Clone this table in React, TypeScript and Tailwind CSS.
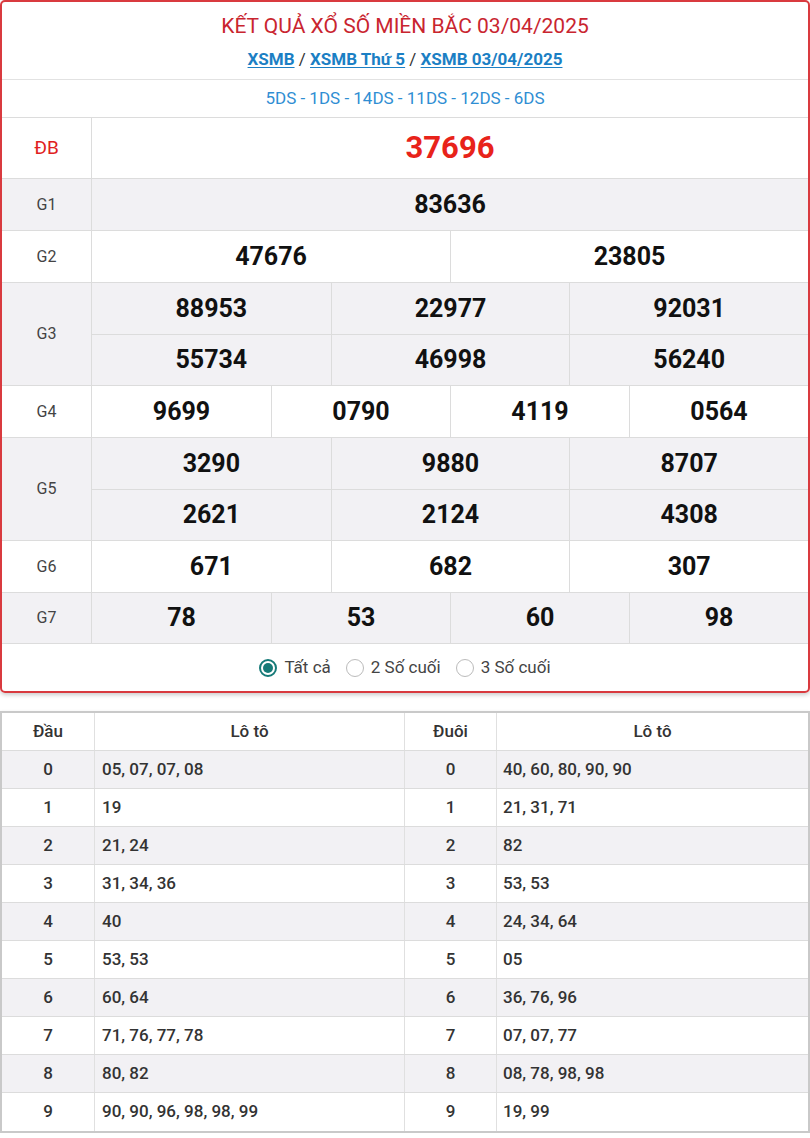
import React from "react";

const F = { fontFamily: "Roboto, 'Noto Sans', sans-serif" };

function Cells({ vals, cols, bg, h = "h-[52px]" }: { vals: string[]; cols: number; bg: string; h?: string }) {
  const gridCls = cols === 1 ? "grid-cols-1" : cols === 2 ? "grid-cols-2" : cols === 3 ? "grid-cols-3" : "grid-cols-4";
  return (
    <div className={`grid ${gridCls} ${bg}`}>
      {vals.map((v, i) => (
        <div
          key={i}
          className={`${h} flex items-center justify-center text-[25px] font-bold text-[#111] border-b border-[#dcdcdc] ${i % cols !== 0 ? "border-l" : ""}`}
        >
          {v}
        </div>
      ))}
    </div>
  );
}

function Row({ label, children, bg }: { label: React.ReactNode; children: React.ReactNode; bg: string }) {
  return (
    <div className={`flex ${bg}`}>
      <div className="w-[90px] shrink-0 flex items-center justify-center text-[16px] text-[#444] border-r border-b border-[#dcdcdc]">
        {label}
      </div>
      <div className="flex-1">{children}</div>
    </div>
  );
}

const dau = [
  ["0", "05, 07, 07, 08", "0", "40, 60, 80, 90, 90"],
  ["1", "19", "1", "21, 31, 71"],
  ["2", "21, 24", "2", "82"],
  ["3", "31, 34, 36", "3", "53, 53"],
  ["4", "40", "4", "24, 34, 64"],
  ["5", "53, 53", "5", "05"],
  ["6", "60, 64", "6", "36, 76, 96"],
  ["7", "71, 76, 77, 78", "7", "07, 07, 77"],
  ["8", "80, 82", "8", "08, 78, 98, 98"],
  ["9", "90, 90, 96, 98, 98, 99", "9", "19, 99"],
];

export default function App() {
  const grey = "bg-[#f2f1f4]";
  const white = "bg-white";
  return (
    <div style={F} className="w-[810px] bg-white">
      <div className="border-2 border-[#d93a3f] rounded-[5px] shadow-[0_2px_4px_rgba(0,0,0,0.2)] overflow-hidden">
        <div className="h-[78px] flex flex-col items-center border-b border-[#e2e2e2]">
          <div className="mt-[10px] text-[21px] leading-[28px] text-[#c9252f]">KẾT QUẢ XỔ SỐ MIỀN BẮC 03/04/2025</div>
          <div className="mt-[9px] text-[17px] leading-[20px] font-bold text-[#1b7fc4]">
            <span className="underline underline-offset-2">XSMB</span>
            <span className="text-[#333] font-normal"> / </span>
            <span className="underline underline-offset-2">XSMB Thứ 5</span>
            <span className="text-[#333] font-normal"> / </span>
            <span className="underline underline-offset-2">XSMB 03/04/2025</span>
          </div>
        </div>
        <div className="h-[38px] flex items-center justify-center text-[17px] text-[#2f8ed3] border-b border-[#dcdcdc]">
          5DS - 1DS - 14DS - 11DS - 12DS - 6DS
        </div>
        <Row label={<span className="text-[#e02020] text-[19px]">ĐB</span>} bg={white}>
          <div className="h-[61px] flex items-center justify-center text-[31px] font-bold text-[#e8231a] border-b border-[#dcdcdc]">37696</div>
        </Row>
        <Row label="G1" bg={grey}>
          <Cells vals={["83636"]} cols={1} bg={grey} />
        </Row>
        <Row label="G2" bg={white}>
          <Cells vals={["47676", "23805"]} cols={2} bg={white} />
        </Row>
        <Row label="G3" bg={grey}>
          <Cells vals={["88953", "22977", "92031", "55734", "46998", "56240"]} cols={3} bg={grey} h="h-[51.5px]" />
        </Row>
        <Row label="G4" bg={white}>
          <Cells vals={["9699", "0790", "4119", "0564"]} cols={4} bg={white} />
        </Row>
        <Row label="G5" bg={grey}>
          <Cells vals={["3290", "9880", "8707", "2621", "2124", "4308"]} cols={3} bg={grey} h="h-[51.5px]" />
        </Row>
        <Row label="G6" bg={white}>
          <Cells vals={["671", "682", "307"]} cols={3} bg={white} />
        </Row>
        <Row label="G7" bg={grey}>
          <Cells vals={["78", "53", "60", "98"]} cols={4} bg={grey} h="h-[51px]" />
        </Row>
        <div className="h-[47px] flex items-center justify-center gap-[15px] text-[17px] text-[#444]">
          <label className="flex items-center gap-[7px]">
            <span className="w-[18px] h-[18px] rounded-full border-[2px] border-[#167a78] flex items-center justify-center">
              <span className="w-[10px] h-[10px] rounded-full bg-[#167a78]" />
            </span>
            Tất cả
          </label>
          <label className="flex items-center gap-[7px]">
            <span className="w-[18px] h-[18px] rounded-full border-[1.5px] border-[#bbb]" />
            2 Số cuối
          </label>
          <label className="flex items-center gap-[7px]">
            <span className="w-[18px] h-[18px] rounded-full border-[1.5px] border-[#bbb]" />
            3 Số cuối
          </label>
        </div>
      </div>

      <div className="mt-[18px] border-2 border-[#c9c9c9] shadow-[0_2px_4px_rgba(0,0,0,0.2)] text-[17px] text-[#333]">
        <div className="grid grid-cols-[93px_310px_92px_1fr] h-[38px] font-medium border-b border-[#dcdcdc]">
          <div className="flex items-center justify-center border-r border-[#e0e0e0]">Đầu</div>
          <div className="flex items-center justify-center border-r border-[#e0e0e0]">Lô tô</div>
          <div className="flex items-center justify-center border-r border-[#e0e0e0]">Đuôi</div>
          <div className="flex items-center justify-center">Lô tô</div>
        </div>
        {dau.map((r, i) => (
          <div
            key={i}
            className={`grid grid-cols-[93px_310px_92px_1fr] h-[38px] font-medium ${i % 2 === 0 ? "bg-[#f2f1f4]" : "bg-white"} ${i < dau.length - 1 ? "border-b border-[#dcdcdc]" : ""}`}
          >
            <div className="flex items-center justify-center border-r border-[#e0e0e0]">{r[0]}</div>
            <div className="flex items-center pl-[7px] border-r border-[#e0e0e0]">{r[1]}</div>
            <div className="flex items-center justify-center border-r border-[#e0e0e0]">{r[2]}</div>
            <div className="flex items-center pl-[6px]">{r[3]}</div>
          </div>
        ))}
      </div>
    </div>
  );
}
